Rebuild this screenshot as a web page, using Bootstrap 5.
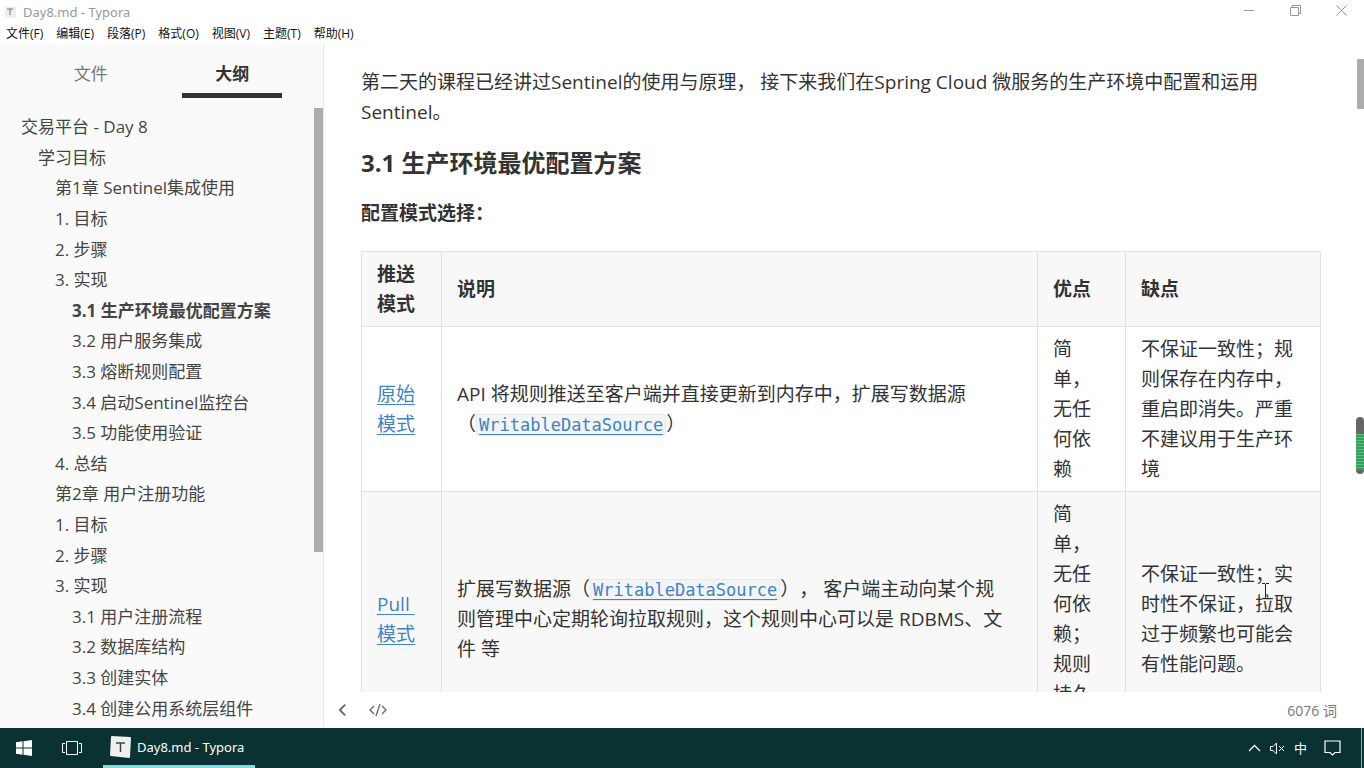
<!DOCTYPE html>
<html lang="zh-CN">
<head>
<meta charset="utf-8">
<meta name="viewport" content="width=device-width, initial-scale=1">
<title>Day8.md - Typora</title>
<link rel="stylesheet" href="https://cdn.jsdelivr.net/npm/bootstrap@5.3.0/dist/css/bootstrap.min.css">
<style>
body { font-family: "Open Sans", "Noto Sans CJK SC", sans-serif; color: #333; background: #fff; text-spacing-trim: space-all; }
button { background: none; border: 0; padding: 0; color: inherit; line-height: inherit; }
svg { display: block; fill: none; stroke: currentColor; }
.title-bar { height: 24px; font: 13px/24px "Noto Sans", "Noto Sans CJK SC", sans-serif; color: #999; padding-left: 4px; }
.title-bar .doc-name { margin-left: 6px; }
.win-controls button { width: 46px; height: 20px; }
.menu-bar { height: 20px; padding-left: 6px; gap: 13px; font-size: 12px; line-height: 20px; color: #111; }
.menu-bar button { font-family: "Open Sans", "Noto Sans CJK SC", sans-serif; }
.side-panel { width: 324px; background: #fafafa; border-right: 1px solid #e8e8e8; color: #444; font-size: 17px; }
.side-tabs { padding: 0 20px 0 20px; height: 54px; }
.side-tabs button { line-height: 49px; padding-top: 5px; color: #777; }
.side-tabs .active { color: #333; font-weight: 700; }
.side-tabs .active::after { content: ""; position: absolute; left: 20px; right: 21px; bottom: 0; height: 5px; background: #333; }
.outline { padding: 14px 0 4px 21px; }
.outline li { flex: 1 0 30px; display: flex; align-items: center; line-height: 24px; }
.outline a { color: inherit; text-decoration: none; white-space: nowrap; }
.lv2 { padding-left: 17px; } .lv3 { padding-left: 34px; } .lv4 { padding-left: 51px; }
.thumb { position: absolute; background: #adadad; }
.side-thumb { right: 0; top: 64px; bottom: 176px; width: 9px; }
.page-thumb { right: 0; top: 15px; height: 50px; width: 7px; }
.meter { position: absolute; right: 0; top: 373px; width: 8px; height: 57px; border-radius: 4px; overflow: hidden; background: #666; padding-top: 17px; }
.meter div { height: 36px; background: repeating-linear-gradient(#55c27c 0 1px, #3a9a5f 1px 3px); }
.doc { padding: 23px 43px 0 37px; font-size: 19px; line-height: 30px; }
.doc h3 { font-size: 24px; line-height: 34px; font-weight: 700; margin: 0 0 18px; }
.doc .intro { margin-bottom: 19px; }
.doc .mode-line { margin-bottom: 23px; }
.mode-table { table-layout: fixed; width: 100%; margin: 0; border-collapse: collapse; }
.mode-table th, .mode-table td { border: 1px solid #dfe2e5; padding: 7px 16px 7px 15px; vertical-align: middle; }
.mode-table thead, .mode-table tbody tr:nth-child(2) { background: #f8f8f8; }
.mode-table a { color: #4183c4; text-decoration: underline; text-underline-offset: 3px; }
.mode-table code { font: 17px/20px "DejaVu Sans Mono", monospace; color: inherit; background: #f3f4f4; border: 1px solid #e7eaed; border-radius: 3px; padding: 0 2px; }
.c-mode { width: 80px; } .c-pro { width: 88px; } .c-con { width: 195px; }
.status { height: 36px; padding: 0 27px 0 14px; gap: 21px; color: #777; font-size: 14px; }
.status svg { stroke: #666; }
.task-bar { height: 40px; background: #0a3233; color: #fff; font: 13px/38px "Noto Sans", "Noto Sans CJK SC", sans-serif; }
.task-bar .icon-btn { width: 48px; display: flex; justify-content: center; }
.task-app { width: 152px; margin-left: 7px; border-bottom: 3px solid #7fdcdf; padding: 0 7px; gap: 6px; white-space: nowrap; }
.tray { gap: 9px; padding-right: 2px; }
.tray .edge { width: 1px; height: 40px; background: #9aabac; margin-left: 11px; }
.pointer { position: absolute; left: 937px; top: 538px; }
</style>
</head>
<body class="vh-100 d-flex flex-column overflow-hidden">
<header>
  <div class="title-bar d-flex justify-content-between">
    <div class="d-flex align-items-center">
      <svg width="13" height="14" viewBox="0 0 13 14"><path d="M1 1l11 1v11l-11-1z" fill="#eee" stroke="none"/><path d="M3 4h6M6 4v6" stroke="#777"/></svg>
      <span class="doc-name">Day8.md - Typora</span>
    </div>
    <div class="win-controls d-flex">
      <button class="d-flex justify-content-center align-items-center" aria-label="最小化"><svg width="11" height="11"><path d="M0 5.500h10"/></svg></button>
      <button class="d-flex justify-content-center align-items-center" aria-label="还原"><svg width="11" height="11"><path d="M.5 2.500h8v8h-8zM2.500 2V.5h8v8H9"/></svg></button>
      <button class="d-flex justify-content-center align-items-center" aria-label="关闭"><svg width="11" height="11"><path d="M.5.5l10 10M10.500.5l-10 10"/></svg></button>
    </div>
  </div>
  <nav class="menu-bar d-flex" aria-label="菜单">
    <button>文件(F)</button><button>编辑(E)</button><button>段落(P)</button><button>格式(O)</button><button>视图(V)</button><button>主题(T)</button><button>帮助(H)</button>
  </nav>
</header>
<div class="d-flex flex-grow-1" style="min-height:0">
  <aside class="side-panel d-flex flex-column flex-shrink-0 position-relative overflow-hidden">
    <div class="side-tabs d-flex">
      <button class="flex-fill w-50">文件</button>
      <button class="flex-fill w-50 position-relative active">大纲</button>
    </div>
    <ul class="outline list-unstyled m-0 d-flex flex-column flex-grow-1">
      <li><a href="#">交易平台 - Day 8</a></li>
      <li class="lv2"><a href="#">学习目标</a></li>
      <li class="lv3"><a href="#">第1章 Sentinel集成使用</a></li>
      <li class="lv3"><a href="#">1. 目标</a></li>
      <li class="lv3"><a href="#">2. 步骤</a></li>
      <li class="lv3"><a href="#">3. 实现</a></li>
      <li class="lv4 fw-bold"><a href="#best">3.1 生产环境最优配置方案</a></li>
      <li class="lv4"><a href="#">3.2 用户服务集成</a></li>
      <li class="lv4"><a href="#">3.3 熔断规则配置</a></li>
      <li class="lv4"><a href="#">3.4 启动Sentinel监控台</a></li>
      <li class="lv4"><a href="#">3.5 功能使用验证</a></li>
      <li class="lv3"><a href="#">4. 总结</a></li>
      <li class="lv3"><a href="#">第2章 用户注册功能</a></li>
      <li class="lv3"><a href="#">1. 目标</a></li>
      <li class="lv3"><a href="#">2. 步骤</a></li>
      <li class="lv3"><a href="#">3. 实现</a></li>
      <li class="lv4"><a href="#">3.1 用户注册流程</a></li>
      <li class="lv4"><a href="#">3.2 数据库结构</a></li>
      <li class="lv4"><a href="#">3.3 创建实体</a></li>
      <li class="lv4"><a href="#">3.4 创建公用系统层组件</a></li>
    </ul>
    <div class="thumb side-thumb"></div>
  </aside>
  <div class="d-flex flex-column flex-grow-1 position-relative" style="min-width:0">
    <main class="doc flex-grow-1 overflow-hidden">
      <p class="intro">第二天的课程已经讲过Sentinel的使用与原理， 接下来我们在Spring Cloud 微服务的生产环境中配置和运用Sentinel。</p>
      <h3 id="best">3.1 生产环境最优配置方案</h3>
      <p class="mode-line fw-bold">配置模式选择：</p>
      <table class="mode-table">
        <colgroup><col class="c-mode"><col><col class="c-pro"><col class="c-con"></colgroup>
        <thead><tr><th>推送模式</th><th>说明</th><th>优点</th><th>缺点</th></tr></thead>
        <tbody>
          <tr><td><a href="#">原始模式</a></td><td>API 将规则推送至客户端并直接更新到内存中，扩展写数据源<br>（<a href="#"><code>WritableDataSource</code></a>）</td><td>简单，无任何依赖</td><td>不保证一致性；规则保存在内存中，重启即消失。严重不建议用于生产环境</td></tr>
          <tr><td><a href="#">Pull&nbsp;<wbr>模式</a></td><td>扩展写数据源（<a href="#"><code>WritableDataSource</code></a>）， 客户端主动向某个规<br>则管理中心定期轮询拉取规则，这个规则中心可以是 RDBMS、文件 等</td><td>简单，无任何依赖；规则持久化</td><td>不保证一致性；实时性不保证，拉取过于频繁也可能会有性能问题。</td></tr>
        </tbody>
      </table>
    </main>
    <footer class="status d-flex align-items-center flex-shrink-0">
      <button aria-label="侧边栏"><svg width="9" height="14" viewBox="0 0 10 14" stroke-width="2"><path d="M8 1L2 7l6 6"/></svg></button>
      <button aria-label="源代码模式"><svg width="20" height="14" viewBox="0 0 20 14" stroke-width="1.300"><path d="M6 3L2 7l4 4M14 3l4 4-4 4M12 1L8 13"/></svg></button>
      <span class="ms-auto">6076 词</span>
    </footer>
    <div class="thumb page-thumb"></div>
    <div class="meter"><div></div></div>
    <svg class="pointer" width="9" height="18" viewBox="0 0 9 18"><path d="M1 1.500h3M5 1.500h3M4.500 2v14M1 16.500h3M5 16.500h3" stroke="#222"/></svg>
  </div>
</div>
<footer class="task-bar d-flex align-items-stretch flex-shrink-0">
  <button class="icon-btn align-items-center" aria-label="开始"><svg width="16" height="16" viewBox="0 0 16 16"><path d="M0 2.200L6.500 1.300V7.500H0zM7.500 1.200L16 0v7.500H7.500zM0 8.500h6.500v6.200L0 13.800zM7.500 8.500H16V16l-8.500-1.200z" fill="#fff" stroke="none"/></svg></button>
  <button class="icon-btn align-items-center" aria-label="任务视图"><svg width="20" height="14" viewBox="0 0 20 14"><path d="M4.500.5h11v13h-11zM3 2.500H.5v9H3M17 2.500h2.500v9H17"/></svg></button>
  <button class="task-app d-flex align-items-center"><svg width="21" height="22" viewBox="0 0 21 22"><path d="M2 0l18 1q1 0 1 1l-1 19q0 1-1 1L1 20q-1 0-1-1L1 1q0-1 1-1z" fill="#f0f0f0" stroke="none"/><path d="M6 7h9M10.500 7v9" stroke="#444" stroke-width="1.500"/></svg><span>Day8.md - Typora</span></button>
  <div class="tray d-flex align-items-center ms-auto">
    <button aria-label="显示隐藏的图标"><svg width="13" height="8" viewBox="0 0 13 8" stroke-width="1.300"><path d="M1 7l5.500-5.500L12 7"/></svg></button>
    <button aria-label="音量"><svg width="15" height="13" viewBox="0 0 15 13"><path d="M.5 4.500H3L6.500 1v11L3 8.500H.5zM9 4l5 5M14 4L9 9"/></svg></button>
    <button aria-label="输入法">中</button>
    <button class="ms-1 ps-1" aria-label="通知"><svg width="17" height="16" viewBox="0 0 17 16" stroke-width="1.200"><path d="M1 1h15v11.500h-5L8.500 15 6 12.500H1z"/></svg></button>
    <div class="edge"></div>
  </div>
</footer>
<script src="https://cdn.jsdelivr.net/npm/bootstrap@5.3.0/dist/js/bootstrap.bundle.min.js"></script>
</body>
</html>
